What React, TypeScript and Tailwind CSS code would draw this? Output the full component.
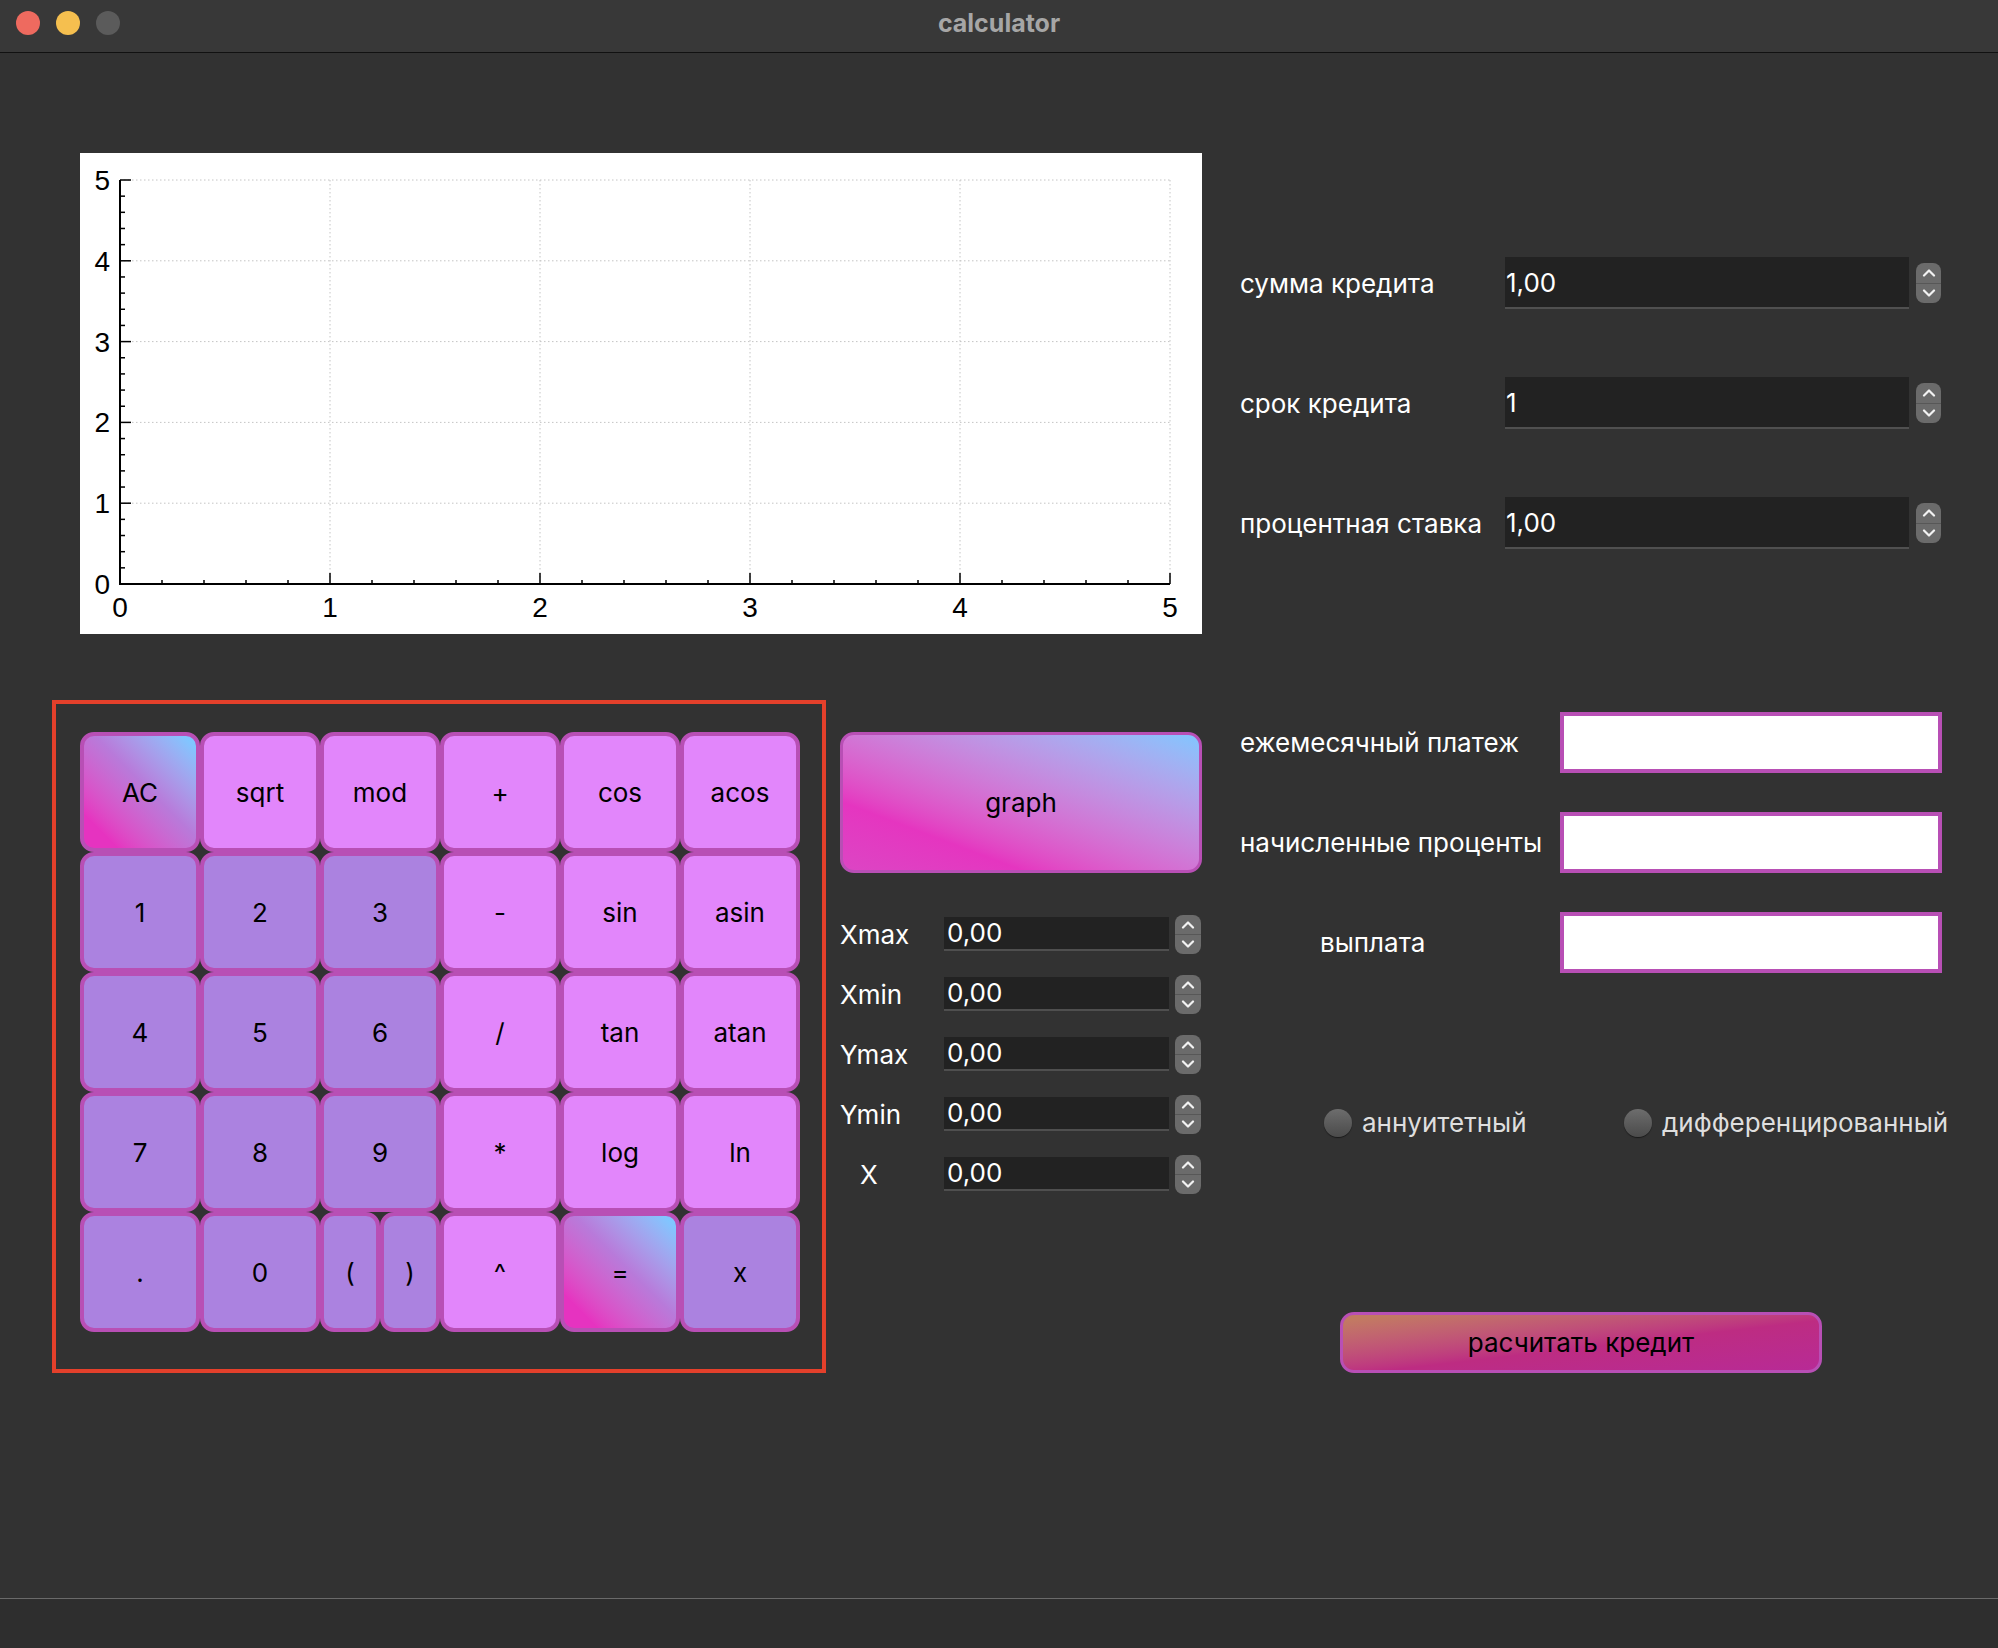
import React from "react";

const FONT = "font-['Inter','Noto_Sans',sans-serif]";

function Spinner({ w = "w-[25px]", h = "h-[40px]" }: { w?: string; h?: string }) {
  return (
    <div className={`${w} ${h} rounded-[8px] bg-[#6b6b6b] flex flex-col overflow-hidden shrink-0`}>
      <div className="flex-1 flex items-center justify-center border-b border-[#575757]">
        <svg width="14" height="9" viewBox="0 0 14 9">
          <path d="M2 7.5 L7 2.5 L12 7.5" fill="none" stroke="#f2f2f2" strokeWidth="2.2" strokeLinecap="round" strokeLinejoin="round" />
        </svg>
      </div>
      <div className="flex-1 flex items-center justify-center">
        <svg width="14" height="9" viewBox="0 0 14 9">
          <path d="M2 1.5 L7 6.5 L12 1.5" fill="none" stroke="#f2f2f2" strokeWidth="2.2" strokeLinecap="round" strokeLinejoin="round" />
        </svg>
      </div>
    </div>
  );
}

function Plot() {
  const X = (v: number) => 40 + v * 210;
  const Y = (v: number) => 431 - v * 80.8;
  const ints = [0, 1, 2, 3, 4, 5];
  const ticks = Array.from({ length: 26 }, (_, i) => i);
  return (
    <svg width="1122" height="481" viewBox="0 0 1122 481" className="block">
      <rect x="0" y="0" width="1122" height="481" fill="#ffffff" />
      {ints.slice(1).map((v) => (
        <g key={"g" + v}>
          <line x1={X(v)} y1={Y(5)} x2={X(v)} y2={Y(0)} stroke="#c4c4c4" strokeWidth="1" strokeDasharray="1.5 2.5" />
          <line x1={X(0)} y1={Y(v)} x2={X(5)} y2={Y(v)} stroke="#c4c4c4" strokeWidth="1" strokeDasharray="1.5 2.5" />
        </g>
      ))}
      <line x1={40} y1={Y(5)} x2={40} y2={432} stroke="#000" strokeWidth="2" />
      <line x1={39} y1={431} x2={X(5)} y2={431} stroke="#000" strokeWidth="2" />
      {ticks.map((i) => {
        const v = i / 5;
        const major = i % 5 === 0;
        return (
          <g key={"t" + i}>
            <line x1={X(v)} y1={431} x2={X(v)} y2={431 - (major ? 11 : 4)} stroke="#000" strokeWidth="1.5" />
            <line x1={40} y1={Y(v)} x2={40 + (major ? 11 : 5)} y2={Y(v)} stroke="#000" strokeWidth="1.5" />
          </g>
        );
      })}
      {ints.map((v) => (
        <g key={"l" + v} fontFamily="Liberation Sans, Arial, sans-serif" fontSize="28" fill="#000">
          <text x={X(v)} y={464} textAnchor="middle">{v}</text>
          <text x={30} y={Y(v) + 10} textAnchor="end">{v}</text>
        </g>
      ))}
    </svg>
  );
}

type Key = { t: string; kind: "pink" | "purple" | "grad"; half?: boolean };

const keys: Key[][] = [
  [
    { t: "AC", kind: "grad" },
    { t: "sqrt", kind: "pink" },
    { t: "mod", kind: "pink" },
    { t: "+", kind: "pink" },
    { t: "cos", kind: "pink" },
    { t: "acos", kind: "pink" },
  ],
  [
    { t: "1", kind: "purple" },
    { t: "2", kind: "purple" },
    { t: "3", kind: "purple" },
    { t: "-", kind: "pink" },
    { t: "sin", kind: "pink" },
    { t: "asin", kind: "pink" },
  ],
  [
    { t: "4", kind: "purple" },
    { t: "5", kind: "purple" },
    { t: "6", kind: "purple" },
    { t: "/", kind: "pink" },
    { t: "tan", kind: "pink" },
    { t: "atan", kind: "pink" },
  ],
  [
    { t: "7", kind: "purple" },
    { t: "8", kind: "purple" },
    { t: "9", kind: "purple" },
    { t: "*", kind: "pink" },
    { t: "log", kind: "pink" },
    { t: "ln", kind: "pink" },
  ],
  [
    { t: ".", kind: "purple" },
    { t: "0", kind: "purple" },
    { t: "(", kind: "purple", half: true },
    { t: ")", kind: "purple", half: true },
    { t: "^", kind: "pink" },
    { t: "=", kind: "grad" },
    { t: "x", kind: "purple" },
  ],
];

function CalcKey({ k }: { k: Key }) {
  const bg =
    k.kind === "pink"
      ? "bg-[#e286fb]"
      : k.kind === "purple"
      ? "bg-[#ab82e0]"
      : "bg-linear-to-tr from-[#e633c0] from-15% via-[#b87ada] via-55% to-[#80c6ff] to-95%";
  return (
    <div
      className={`${k.half ? "w-[60px]" : "w-[120px]"} h-[120px] rounded-[14px] border-4 border-[#b84fb5] ${bg} flex items-center justify-center text-[26px] text-black`}
    >
      {k.t}
    </div>
  );
}

function SmallSpin({ label, center }: { label: string; center?: boolean }) {
  return (
    <div className="flex items-center h-[40px]">
      <div className={`w-[104px] text-[26px] text-white ${center ? "pl-[20px]" : ""}`}>{label}</div>
      <div className="w-[225px] h-[34px] bg-[#222222] border-b-2 border-[#4f4f4f] text-[26px] text-white leading-[32px] pl-[3px]">
        0,00
      </div>
      <div className="ml-[6px]">
        <Spinner w="w-[26px]" h="h-[39px]" />
      </div>
    </div>
  );
}

function CreditRow({ label, value }: { label: string; value: string }) {
  return (
    <div className="flex items-center h-[52px]">
      <div className="w-[265px] text-[26px] text-white">{label}</div>
      <div className="w-[404px] h-[52px] bg-[#222222] border-b-2 border-[#505050] text-[26px] text-white leading-[52px] pl-[1px]">
        {value}
      </div>
      <div className="ml-[7px]">
        <Spinner />
      </div>
    </div>
  );
}

function ResultRow({ label, pad }: { label: string; pad?: string }) {
  return (
    <div className="flex items-center h-[61px]">
      <div className={`w-[320px] text-[26px] text-white ${pad ?? ""}`}>{label}</div>
      <div className="w-[382px] h-[61px] border-4 border-[#b84fb5] bg-white" />
    </div>
  );
}

function Radio({ label }: { label: string }) {
  return (
    <div className="flex items-center">
      <div className="w-[28px] h-[28px] rounded-full bg-linear-to-b from-[#6d6d6d] to-[#4b4b4b] shadow-[0_1px_1px_rgba(0,0,0,0.5)]" />
      <div className="ml-[10px] text-[26px] text-[#dedede]">{label}</div>
    </div>
  );
}

export default function App() {
  return (
    <div className={`w-[1998px] h-[1648px] bg-[#323232] flex flex-col overflow-hidden ${FONT}`}>
      {/* title bar */}
      <div className="h-[53px] shrink-0 bg-[#383838] border-b border-[#111111] grid grid-cols-[1fr_auto_1fr] items-center pb-[6px]">
        <div className="flex items-center gap-[16px] pl-[16px]">
          <div className="w-[24px] h-[24px] rounded-full bg-[#ee6a5f]" />
          <div className="w-[24px] h-[24px] rounded-full bg-[#f5bf4f]" />
          <div className="w-[24px] h-[24px] rounded-full bg-[#5b5b5b]" />
        </div>
        <div className="text-[25px] font-bold text-[#a6a6a6] leading-none">calculator</div>
        <div />
      </div>

      {/* body */}
      <div className="flex-1 flex pl-[52px]">
        {/* left */}
        <div className="w-[1150px] flex flex-col">
          <div className="ml-[28px] mt-[100px] w-[1122px] h-[481px]">
            <Plot />
          </div>
          <div className="mt-[66px] flex">
            <div className="w-[774px] h-[673px] border-4 border-[#e4402b] pt-[28px] pl-[24px] flex flex-col">
              {keys.map((row, ri) => (
                <div key={ri} className="flex">
                  {row.map((k, ki) => (
                    <CalcKey key={ki} k={k} />
                  ))}
                </div>
              ))}
            </div>
            <div className="ml-[14px] w-[362px] pt-[32px] flex flex-col">
              <div className="h-[141px] rounded-[14px] border-[3px] border-[#b84fb5] bg-linear-to-tr from-[#dc45c4] from-0% via-[#e535c0] via-25% to-[#80c6ff] to-100% flex items-center justify-center text-[26px] text-black">
                graph
              </div>
              <div className="mt-[41px] flex flex-col gap-[20px]">
                <SmallSpin label="Xmax" />
                <SmallSpin label="Xmin" />
                <SmallSpin label="Ymax" />
                <SmallSpin label="Ymin" />
                <SmallSpin label="X" center />
              </div>
            </div>
          </div>
        </div>

        {/* right */}
        <div className="ml-[38px] w-[720px] flex flex-col">
          <div className="mt-[204px] flex flex-col gap-[68px]">
            <CreditRow label="сумма кредита" value="1,00" />
            <CreditRow label="срок кредита" value="1" />
            <CreditRow label="процентная ставка" value="1,00" />
          </div>
          <div className="mt-[163px] flex flex-col gap-[39px]">
            <ResultRow label="ежемесячный платеж" />
            <ResultRow label="начисленные проценты" />
            <ResultRow label="выплата" pad="pl-[80px]" />
          </div>
          <div className="mt-[130px] pl-[84px] flex items-center">
            <div className="w-[300px]">
              <Radio label="аннуитетный" />
            </div>
            <Radio label="дифференцированный" />
          </div>
          <div className="mt-[170px] pl-[100px]">
            <div className="w-[482px] h-[61px] rounded-[14px] border-[3px] border-[#b84fb5] bg-linear-to-br from-[#c27a62] from-5% via-[#bd2c82] via-55% to-[#b82a96] to-100% flex items-center justify-center text-[26px] text-black">
              расчитать кредит
            </div>
          </div>
        </div>
      </div>

      {/* footer */}
      <div className="h-[50px] shrink-0 bg-[#2e2e2e] border-t border-[#6a6a6a]" />
    </div>
  );
}
